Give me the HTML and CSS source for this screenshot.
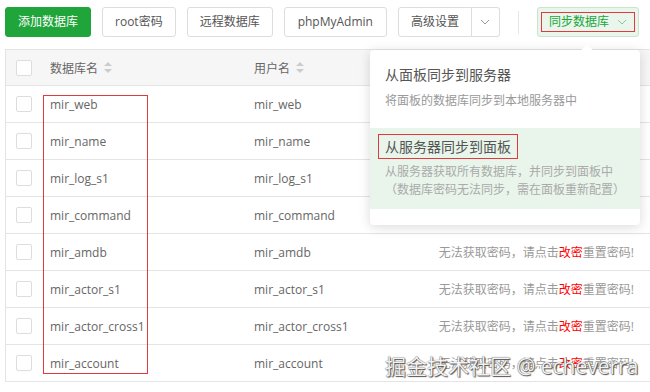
FILE: index.html
```html
<!DOCTYPE html>
<html lang="zh-CN">
<head>
    <meta charset="UTF-8">
    <meta name="viewport" content="width=device-width, initial-scale=1.0">
    <title>数据库</title>
    <link rel="stylesheet" href="styles.css">
</head>
<body>
    <div class="page">
        <div class="toolbar">
            <button class="btn btn-green">添加数据库</button>
            <button class="btn">root密码</button>
            <button class="btn">远程数据库</button>
            <button class="btn btn-wide">phpMyAdmin</button>
            <div class="btn-group">
                <button class="btn btn-main">高级设置</button>
                <button class="btn btn-caret">
                    <svg width="10" height="6" viewBox="0 0 10 6"><polyline points="1,1 5,5 9,1" fill="none" stroke="#999" stroke-width="1"/></svg>
                </button>
            </div>
            <span class="divider"></span>
            <button class="btn btn-sync">
                <span class="sync-mark">同步数据库
                    <svg width="10" height="6" viewBox="0 0 10 6"><polyline points="1,1 5,5 9,1" fill="none" stroke="#8cc79a" stroke-width="1"/></svg>
                </span>
            </button>
        </div>

        <div class="db-table">
            <div class="row head">
                <div class="cell"><span class="check"></span></div>
                <div class="cell">数据库名 <span class="sort"></span></div>
                <div class="cell">用户名 <span class="sort"></span></div>
                <div class="cell"></div>
            </div>
            <div class="row">
                <div class="cell"><span class="check"></span></div>
                <div class="cell">mir_web</div>
                <div class="cell">mir_web</div>
                <div class="cell pass"></div>
            </div>
            <div class="row">
                <div class="cell"><span class="check"></span></div>
                <div class="cell">mir_name</div>
                <div class="cell">mir_name</div>
                <div class="cell pass"></div>
            </div>
            <div class="row">
                <div class="cell"><span class="check"></span></div>
                <div class="cell">mir_log_s1</div>
                <div class="cell">mir_log_s1</div>
                <div class="cell pass"></div>
            </div>
            <div class="row">
                <div class="cell"><span class="check"></span></div>
                <div class="cell">mir_command</div>
                <div class="cell">mir_command</div>
                <div class="cell pass"></div>
            </div>
            <div class="row">
                <div class="cell"><span class="check"></span></div>
                <div class="cell">mir_amdb</div>
                <div class="cell">mir_amdb</div>
                <div class="cell pass">无法获取密码，请点击<span class="red">改密</span>重置密码!</div>
            </div>
            <div class="row">
                <div class="cell"><span class="check"></span></div>
                <div class="cell">mir_actor_s1</div>
                <div class="cell">mir_actor_s1</div>
                <div class="cell pass">无法获取密码，请点击<span class="red">改密</span>重置密码!</div>
            </div>
            <div class="row">
                <div class="cell"><span class="check"></span></div>
                <div class="cell">mir_actor_cross1</div>
                <div class="cell">mir_actor_cross1</div>
                <div class="cell pass">无法获取密码，请点击<span class="red">改密</span>重置密码!</div>
            </div>
            <div class="row">
                <div class="cell"><span class="check"></span></div>
                <div class="cell">mir_account</div>
                <div class="cell">mir_account</div>
                <div class="cell pass">无法获取密码，请点击<span class="red">改密</span>重置密码!</div>
            </div>
        </div>

        <!-- annotation around the database names -->
        <div class="name-mark"></div>

        <!-- sync dropdown -->
        <div class="sync-menu">
            <div class="menu-item">
                <div class="menu-title">从面板同步到服务器</div>
                <div class="menu-desc">将面板的数据库同步到本地服务器中</div>
            </div>
            <div class="menu-item active">
                <div class="menu-title"><span class="title-mark">从服务器同步到面板</span></div>
                <div class="menu-desc">从服务器获取所有数据库，并同步到面板中<br>（数据库密码无法同步，需在面板重新配置）</div>
            </div>
        </div>

        <div class="watermark">掘金技术社区 @ echeverra</div>
    </div>
</body>
</html>
```

FILE: styles.css
```css
body {
    margin: 0;
    font-family: "Open Sans", "Noto Sans CJK SC", sans-serif;
    font-size: 12px;
    color: #666666;
    background-color: #ffffff;
    overflow: hidden;
}

.page {
    position: relative;
    width: 650px;
    height: 392px;
    overflow: hidden;
}

.toolbar {
    display: flex;
    align-items: center;
    gap: 11px;
    padding: 7px 0 0 5px;
    height: 30px;
}

.btn {
    height: 30px;
    padding: 0 12px;
    border: 1px solid #dddddd;
    border-radius: 3px;
    background-color: #ffffff;
    color: #555555;
    font-family: inherit;
    font-size: 12px;
    line-height: 28px;
    box-sizing: border-box;
}

.btn-green {
    background-color: #20a53a;
    border-color: #20a53a;
    color: #ffffff;
}

.btn-wide {
    padding: 0 13px;
}

.btn-group {
    display: flex;
}

.btn-main {
    width: 74px;
    border-radius: 3px 0 0 3px;
}

.btn-caret {
    width: 28px;
    padding: 0;
    border-left: none;
    border-radius: 0 3px 3px 0;
    display: flex;
    align-items: center;
    justify-content: center;
}

.divider {
    width: 1px;
    height: 23px;
    background-color: #e6e6e6;
    margin: 0 7px;
}

.btn-sync {
    width: 102px;
    padding: 0 3px;
    background-color: #eaf6ec;
    border-color: #c8e6cf;
    color: #20a53a;
    display: flex;
    align-items: center;
}

.sync-mark {
    display: flex;
    align-items: center;
    justify-content: center;
    gap: 8px;
    width: 94px;
    height: 20px;
    border: 1px solid #e0393e;
    box-sizing: border-box;
    line-height: 18px;
}

.db-table {
    margin: 12px 0 0 5px;
    border-top: 1px solid #e4e4e4;
    border-left: 1px solid #e4e4e4;
}

.row {
    display: grid;
    grid-template-columns: 34px 204px 120px 1fr;
    height: 37px;
    border-bottom: 1px solid #e4e4e4;
    box-sizing: border-box;
}

.row.head {
    height: 36px;
    background-color: #f6f6f6;
}

.cell {
    display: flex;
    align-items: center;
    padding-left: 10px;
    white-space: nowrap;
}

.check {
    width: 16px;
    height: 16px;
    border: 1px solid #dddddd;
    border-radius: 2px;
    background-color: #ffffff;
    box-sizing: border-box;
}

.sort {
    display: inline-block;
    position: relative;
    width: 8px;
    height: 11px;
    margin-left: 6px;
}

.sort::before,
.sort::after {
    content: "";
    position: absolute;
    left: 0;
    border-left: 4px solid transparent;
    border-right: 4px solid transparent;
}

.sort::before {
    top: 0;
    border-bottom: 4px solid #cccccc;
}

.sort::after {
    bottom: 0;
    border-top: 4px solid #cccccc;
}

.pass {
    justify-content: flex-end;
    padding-right: 16px;
    color: #999999;
}

.red {
    color: #ff0000;
}

.name-mark {
    position: absolute;
    left: 43px;
    top: 95px;
    width: 105px;
    height: 279px;
    border: 1px solid #e0393e;
    box-sizing: border-box;
}

.sync-menu {
    position: absolute;
    left: 370px;
    top: 50px;
    width: 270px;
    height: 175px;
    background-color: #ffffff;
    border-radius: 4px;
    box-shadow: 0 2px 12px rgba(0, 0, 0, 0.15);
}

.sync-menu::before {
    content: "";
    position: absolute;
    top: -4px;
    left: 213px;
    width: 8px;
    height: 8px;
    background-color: #ffffff;
    transform: rotate(45deg);
}

.menu-item {
    padding: 14px 15px 18px;
}

.menu-item.active {
    background-color: #e9f5eb;
    padding: 6px 15px 10px;
}

.menu-title {
    font-size: 14px;
    line-height: 22px;
    color: #555555;
}

.title-mark {
    display: inline-block;
    margin-left: -7px;
    padding: 0 6px;
    line-height: 23px;
    border: 1px solid #e0393e;
}

.menu-desc {
    margin-top: 6px;
    font-size: 12px;
    line-height: 18px;
    color: #999999;
}

.active .menu-desc {
    margin-top: 4px;
    color: #aaaaaa;
}

.watermark {
    position: absolute;
    left: 385px;
    top: 352px;
    font-size: 21px;
    line-height: 28px;
    color: #f2f2f2;
    text-shadow: 0 0 1px #333333, 1px 1px 1px #555555;
    white-space: nowrap;
}
```
